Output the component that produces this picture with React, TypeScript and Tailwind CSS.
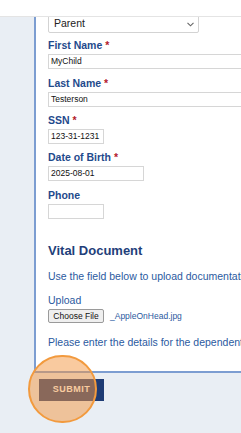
import React from 'react';

const font = { fontFamily: '"Liberation Sans", Arial, sans-serif' };

const Label: React.FC<{ text: string; required?: boolean }> = ({ text, required }) => (
  <div className="whitespace-nowrap text-[10.5px] leading-[14px] font-bold text-[#1f4a8c]">
    {text}
    {required && <span className="text-[#b3192c]"> *</span>}
  </div>
);

const Field: React.FC<{ label: string; value: string; width: string; required?: boolean; mb: string }> = ({
  label,
  value,
  width,
  required,
  mb,
}) => (
  <div className={mb}>
    <Label text={label} required={required} />
    <div
      className={`${width} mt-[2px] h-[15px] overflow-hidden whitespace-nowrap border border-[#d6d6d6] bg-white pl-[2px] text-[8.5px] leading-[13px] text-[#111]`}
    >
      {value}
    </div>
  </div>
);

export default function App() {
  return (
    <div className="relative w-[241px] h-[433px] overflow-hidden bg-[#e9eef4]" style={font}>
      {/* sticky header strip */}
      <div className="absolute left-0 top-0 z-10 h-[17px] w-full bg-white border-b border-[#e4e4e4]" />

      <div className="ml-[34px] w-[260px] border-l-2 border-b-2 border-[#7c9dd1] bg-white pl-[12px] pt-[13px] h-[373px]">
        <div className="relative w-[151px] h-[20px] rounded-[2px] border border-[#d3d3d3] bg-white pl-[5px] text-[10.5px] leading-[18px] text-[#222]">
          Parent
          <svg className="absolute right-[4px] top-[8px]" width="7" height="5" viewBox="0 0 7 5">
            <path d="M0.5 0.8 L3.5 3.8 L6.5 0.8" fill="none" stroke="#666" strokeWidth="1.1" />
          </svg>
        </div>

        <div className="mt-[5px]">
          <Field label="First Name" required value="MyChild" width="w-[220px]" mb="mb-[7px]" />
          <Field label="Last Name" required value="Testerson" width="w-[220px]" mb="mb-[6px]" />
          <Field label="SSN" required value="123-31-1231" width="w-[56px]" mb="mb-[6px]" />
          <Field label="Date of Birth" required value="2025-08-01" width="w-[96px]" mb="mb-[7px]" />
          <Field label="Phone" value="" width="w-[56px]" mb="mb-0" />
        </div>

        <div className="mt-[24px] text-[13px] leading-[16px] font-bold text-[#1f3f7a]">Vital Document</div>
        <div className="mt-[10px] whitespace-nowrap text-[10.5px] leading-[14px] text-[#2b5aa0]">
          Use the field below to upload documentation
        </div>
        <div className="mt-[10px] text-[10.5px] leading-[14px] text-[#2b5aa0]">Upload</div>
        <div className="mt-[2px] flex items-center gap-[6px]">
          <div className="flex h-[14px] w-[56px] items-center justify-center rounded-[2px] border border-[#9a9a9a] bg-[#efefef] text-[8.5px] text-[#111]">
            Choose File
          </div>
          <span className="text-[8.5px] text-[#2b5aa0]">_AppleOnHead.jpg</span>
        </div>
        <div className="mt-[12px] whitespace-nowrap text-[10.5px] leading-[14px] text-[#2b5aa0]">
          Please enter the details for the dependent
        </div>
      </div>

      <div className="ml-[39px] mt-[6px] flex h-[22px] w-[65px] items-center justify-center bg-[#1e3b74] text-[9px] font-bold tracking-[0.5px] text-white">
        SUBMIT
      </div>

      {/* click highlight */}
      <div className="absolute left-[28px] top-[355px] h-[68px] w-[69px] rounded-full border-2 border-[#f29a3e] bg-[#f4963f]/50" />
    </div>
  );
}
